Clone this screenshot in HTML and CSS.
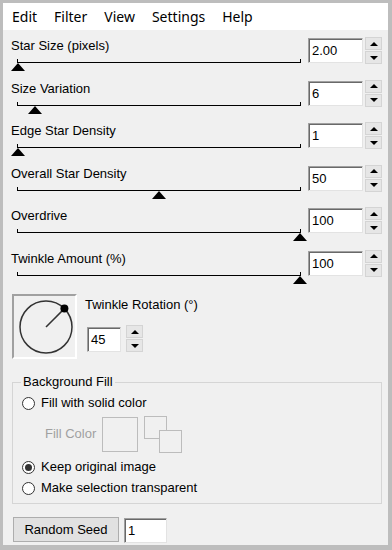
FILE: index.html
```html
<!DOCTYPE html>
<html>
    <head>
        <title>Twinkle</title>
        <link rel="stylesheet" href="styles.css">
    </head>
    <body>
        <div class="window">
            <div class="menubar">
                <span>Edit</span>
                <span>Filter</span>
                <span>View</span>
                <span>Settings</span>
                <span>Help</span>
            </div>

            <div class="content">
                <div class="row">
                    <div class="sliderCol">
                        <div class="label">Star Size (pixels)</div>
                        <div class="track"><div class="thumb" style="left:0%"></div></div>
                    </div>
                    <div class="textbox">2.00</div>
                    <div class="spinner"><div class="spinBtn up"></div><div class="spinBtn down"></div></div>
                </div>
                <div class="row">
                    <div class="sliderCol">
                        <div class="label">Size Variation</div>
                        <div class="track"><div class="thumb" style="left:6%"></div></div>
                    </div>
                    <div class="textbox">6</div>
                    <div class="spinner"><div class="spinBtn up"></div><div class="spinBtn down"></div></div>
                </div>
                <div class="row">
                    <div class="sliderCol">
                        <div class="label">Edge Star Density</div>
                        <div class="track"><div class="thumb" style="left:0%"></div></div>
                    </div>
                    <div class="textbox">1</div>
                    <div class="spinner"><div class="spinBtn up"></div><div class="spinBtn down"></div></div>
                </div>
                <div class="row">
                    <div class="sliderCol">
                        <div class="label">Overall Star Density</div>
                        <div class="track"><div class="thumb" style="left:50%"></div></div>
                    </div>
                    <div class="textbox">50</div>
                    <div class="spinner"><div class="spinBtn up"></div><div class="spinBtn down"></div></div>
                </div>
                <div class="row">
                    <div class="sliderCol">
                        <div class="label">Overdrive</div>
                        <div class="track"><div class="thumb" style="left:100%"></div></div>
                    </div>
                    <div class="textbox">100</div>
                    <div class="spinner"><div class="spinBtn up"></div><div class="spinBtn down"></div></div>
                </div>
                <div class="row">
                    <div class="sliderCol">
                        <div class="label">Twinkle Amount (%)</div>
                        <div class="track"><div class="thumb" style="left:100%"></div></div>
                    </div>
                    <div class="textbox">100</div>
                    <div class="spinner"><div class="spinBtn up"></div><div class="spinBtn down"></div></div>
                </div>

                <div class="rotation">
                    <div class="dial">
                        <svg width="61" height="61" viewBox="0 0 61 61">
                            <circle cx="32" cy="31" r="26" fill="none" stroke="#333" stroke-width="1.5"/>
                            <line x1="32" y1="31" x2="50.4" y2="12.6" stroke="#333" stroke-width="1.5"/>
                            <circle cx="50.4" cy="12.6" r="4" fill="#000"/>
                        </svg>
                    </div>
                    <div class="rotControls">
                        <div class="label">Twinkle Rotation (°)</div>
                        <div class="spinRow">
                            <div class="textbox small">45</div>
                            <div class="spinner"><div class="spinBtn up"></div><div class="spinBtn down"></div></div>
                        </div>
                    </div>
                </div>

                <fieldset class="group">
                    <legend>Background Fill</legend>
                    <div class="radioRow"><span class="radio"></span>Fill with solid color</div>
                    <div class="fillRow">
                        <span class="disabled">Fill Color</span>
                        <div class="colorBox"></div>
                        <div class="swatches">
                            <div class="swatch back"></div>
                            <div class="swatch front"></div>
                        </div>
                    </div>
                    <div class="radioRow second"><span class="radio checked"></span>Keep original image</div>
                    <div class="radioRow"><span class="radio"></span>Make selection transparent</div>
                </fieldset>

                <div class="seedRow">
                    <div class="button">Random Seed</div>
                    <div class="textbox seed">1</div>
                </div>
            </div>
        </div>
    </body>
</html>
```

FILE: styles.css
```css
body{
    margin:0;
    font-family:"Liberation Sans", Arial, sans-serif;
    font-size:13px;
    color:#000;
}
.window{
    width:392px;
    height:550px;
    box-sizing:border-box;
    border-style:solid;
    border-color:#bdbdbd;
    border-width:3px 4px 5px 3px;
    background:#f0f0f0;
}
.menubar{
    height:27px;
    background:#fff;
    display:flex;
    align-items:center;
    gap:17px;
    padding-left:9px;
    font-family:"Noto Sans", sans-serif;
    font-size:14px;
}
.content{
    padding:6px 6px 0 8px;
}
.row{
    display:grid;
    grid-template-columns:1fr 55px 17px;
    column-gap:2px;
    height:42.5px;
}
.label{
    line-height:16px;
    margin-top:2px;
}
.track{
    position:relative;
    margin:5px 5px 0 6px;
    height:3px;
    border:1px solid #000;
    border-top:none;
}
.thumb{
    position:absolute;
    top:4px;
    margin-left:-7px;
    width:0;
    height:0;
    border-left:7px solid transparent;
    border-right:7px solid transparent;
    border-bottom:8px solid #000;
}
.textbox{
    margin-top:2px;
    height:25px;
    box-sizing:border-box;
    background:#fff;
    border:1px solid;
    border-color:#a0a0a0 #e3e3e3 #e3e3e3 #a0a0a0;
    box-shadow:inset 1px 1px 0 #696969;
    padding:0 3px;
    line-height:23px;
}
.spinner{
    margin-top:1px;
    width:17px;
    display:flex;
    flex-direction:column;
    gap:1px;
}
.spinBtn{
    height:13px;
    box-sizing:border-box;
    background:#e6e6e6;
    border:1px solid #d4d4d4;
    display:flex;
    align-items:center;
    justify-content:center;
}
.spinBtn::after{
    content:"";
    width:0;
    height:0;
    border-left:4px solid transparent;
    border-right:4px solid transparent;
}
.up::after{
    border-bottom:4px solid #000;
}
.down::after{
    border-top:4px solid #000;
}

/* twinkle rotation */
.rotation{
    display:flex;
    margin:3px 0 0 1px;
}
.dial{
    width:65px;
    height:65px;
    box-sizing:border-box;
    border:2px solid;
    border-color:#a0a0a0 #fff #fff #a0a0a0;
}
.rotControls{
    margin-left:8px;
}
.rotControls .label{
    margin-top:3px;
}
.spinRow{
    display:flex;
    margin-top:12px;
}
.textbox.small{
    width:34px;
    margin-left:2px;
}
.spinRow .spinner{
    margin:0 0 0 5px;
}

/* background fill */
.group{
    margin:15px 0 0 1px;
    padding:5px 0 7px 0;
    border:1px solid #d5d5d5;
}
.group legend{
    margin-left:8px;
    padding:0 2px;
    line-height:16px;
}
.radioRow{
    display:flex;
    align-items:center;
    line-height:16px;
}
.radioRow + .radioRow{
    margin-top:5px;
}
.radioRow.second{
    margin-top:6px;
}
.radio{
    width:13px;
    height:13px;
    box-sizing:border-box;
    border:1px solid #333;
    border-radius:50%;
    background:#fff;
    margin:0 6px 0 9px;
    display:flex;
    align-items:center;
    justify-content:center;
}
.radio.checked::after{
    content:"";
    width:7px;
    height:7px;
    border-radius:50%;
    background:#333;
}
.fillRow{
    display:flex;
    align-items:center;
    margin-top:5px;
}
.disabled{
    color:#a0a0a0;
    margin:0 0 3px 32px;
}
.colorBox{
    width:36px;
    height:35px;
    box-sizing:border-box;
    border:1px solid #bcbcbc;
    margin-left:6px;
}
.swatches{
    position:relative;
    width:38px;
    height:37px;
    margin-left:6px;
}
.swatch{
    position:absolute;
    width:23px;
    height:23px;
    box-sizing:border-box;
    border:1px solid #bcbcbc;
    background:#f0f0f0;
}
.swatch.back{
    left:0;
    top:0;
}
.swatch.front{
    left:15px;
    top:14px;
}

/* seed */
.seedRow{
    display:flex;
    margin:13px 0 0 2px;
}
.button{
    width:106px;
    height:25px;
    box-sizing:border-box;
    background:#e1e1e1;
    border:1px solid #adadad;
    text-align:center;
    line-height:23px;
}
.textbox.seed{
    width:43px;
    margin:1px 0 0 5px;
}
```
